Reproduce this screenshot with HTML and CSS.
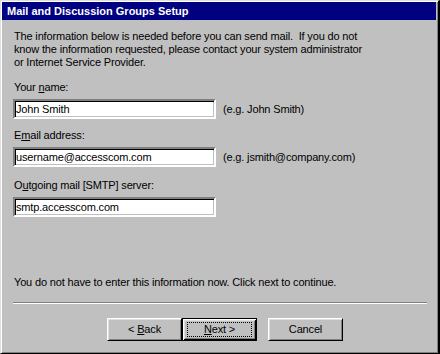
FILE: index.html
```html
<!DOCTYPE html>
<html>
<head>
<meta charset="utf-8">
<link rel="stylesheet" href="styles.css">
</head>
<body>
<div class="window">
  <div class="titlebar">Mail and Discussion Groups Setup</div>
  <div class="content">
    <p class="intro">The information below is needed before you can send mail.&nbsp; If you do not<br>know the information requested, please contact your system administrator<br>or Internet Service Provider.</p>
    <div class="field f1">
      <div class="label">Your <u>n</u>ame:</div>
      <div class="row">
        <div class="textbox">John Smith</div>
        <div class="hint">(e.g. John Smith)</div>
      </div>
    </div>
    <div class="field f2">
      <div class="label">E<u>m</u>ail address:</div>
      <div class="row">
        <div class="textbox">username@accesscom.com</div>
        <div class="hint">(e.g. jsmith@company.com)</div>
      </div>
    </div>
    <div class="field f3">
      <div class="label">O<u>u</u>tgoing mail [SMTP] server:</div>
      <div class="row">
        <div class="textbox">smtp.accesscom.com</div>
      </div>
    </div>
    <p class="note">You do not have to enter this information now. Click next to continue.</p>
    <div class="separator"></div>
    <div class="buttons">
      <div class="btn"><span>&lt;&nbsp;<u>B</u>ack</span></div>
      <div class="btn default"><span class="focus"><span><u>N</u>ext&nbsp;&gt;</span></span></div>
      <div class="btn cancel"><span>Cancel</span></div>
    </div>
  </div>
</div>
</body>
</html>
```
FILE: styles.css
```css
html, body {
  margin: 0;
  padding: 0;
  background: #c0c0c0;
}
.window {
  width: 440px;
  height: 354px;
  box-sizing: border-box;
  background: #c0c0c0;
  border-style: solid;
  border-width: 1px 2px 1px 1px;
  border-color: #dfdfdf #000 #000 #dfdfdf;
  box-shadow: inset 1px 1px 0 #fff, inset -1px -1px 0 #808080;
  padding: 1px 2px 2px 1px;
  display: flex;
  flex-direction: column;
  font-family: "Liberation Sans", Arial, sans-serif;
  font-size: 11px;
  line-height: 13px;
  letter-spacing: -0.16px;
  color: #000;
}
.titlebar {
  height: 18px;
  background: #000080;
  color: #fff;
  font-weight: bold;
  font-size: 11px;
  line-height: 18px;
  letter-spacing: 0;
  padding-left: 5px;
}
.content {
  padding-left: 11px;
  display: flex;
  flex-direction: column;
}
.intro {
  margin: 10px 0 0 1px;
}
.field {
  display: flex;
  flex-direction: column;
}
.f1 { margin-top: 12px; }
.f2 { margin-top: 10px; }
.f3 { margin-top: 12px; }
.label {
  margin-left: 1px;
  margin-bottom: 5px;
}
.row {
  display: flex;
  align-items: center;
}
.textbox {
  width: 198px;
  height: 16px;
  background: #fff;
  border: 2px solid;
  border-color: #808080 #fff #fff #808080;
  box-shadow: inset 1px 1px 0 #000, inset -1px -1px 0 #c0c0c0;
  padding-left: 1px;
  line-height: 16px;
  white-space: nowrap;
}
.hint {
  margin-left: 7px;
}
.note {
  margin: 59px 0 0 1px;
}
.separator {
  margin-top: 13px;
  width: 414px;
  height: 1px;
  background: #808080;
  border-bottom: 1px solid #fff;
}
.buttons {
  display: flex;
  margin-top: 14px;
  padding-left: 94px;
}
.btn {
  width: 75px;
  height: 23px;
  box-sizing: border-box;
  border: 1px solid;
  border-color: #fff #000 #000 #fff;
  box-shadow: inset 1px 1px 0 #dfdfdf, inset -1px -1px 0 #808080;
  display: flex;
  align-items: center;
  justify-content: center;
}
.btn.default {
  border: 1px solid #000;
  box-shadow: inset 1px 1px 0 #fff, inset -1px -1px 0 #000, inset 2px 2px 0 #dfdfdf, inset -2px -2px 0 #808080;
}
.focus {
  display: flex;
  align-items: center;
  justify-content: center;
  width: 65px;
  height: 15px;
  box-sizing: border-box;
  border: 1px dotted #000;
}
.btn.cancel {
  margin-left: 11px;
}
```
